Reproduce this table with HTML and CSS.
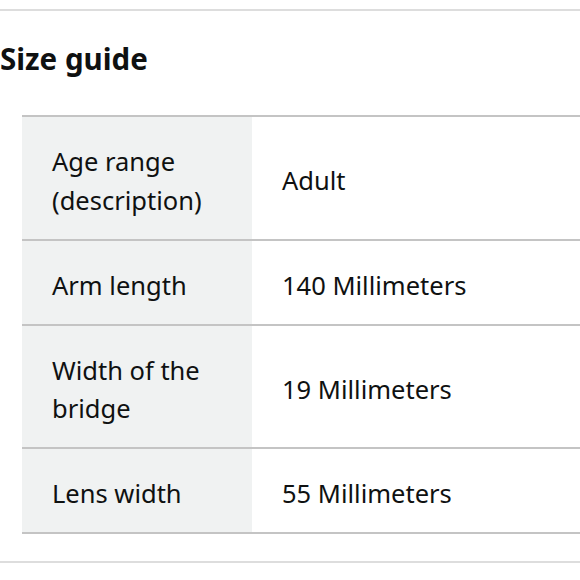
FILE: index.html
```html
<!DOCTYPE html>
<html>
<head>
<meta charset="utf-8">
<link rel="stylesheet" href="styles.css">
</head>
<body>
<div class="rule top"></div>
<h2 class="title">Size guide</h2>
<table class="guide">
  <tr><th>Age range (description)</th><td>Adult</td></tr>
  <tr><th>Arm length</th><td>140 Millimeters</td></tr>
  <tr><th>Width of the bridge</th><td>19 Millimeters</td></tr>
  <tr><th>Lens width</th><td>55 Millimeters</td></tr>
</table>
<div class="rule bottom"></div>
</body>
</html>
```
FILE: styles.css
```css
html, body {
  margin: 0;
  padding: 0;
  background: #fff;
}
body {
  font-family: "Noto Sans", "Open Sans", sans-serif;
  color: #0f1111;
  width: 580px;
  overflow: hidden;
}
.rule {
  height: 0;
  border-top: 2px solid #dddddd;
}
.rule.top {
  margin-top: 9px;
}
.title {
  margin: 28px 0 0 0;
  font-size: 29.5px;
  line-height: 40px;
  font-weight: 700;
}
.guide {
  margin: 36px 0 0 22px;
  width: 580px;
  border-collapse: collapse;
  font-size: 25.5px;
  line-height: 38.5px;
}
.guide tr {
  border-top: 2px solid #c4c4c4;
  border-bottom: 2px solid #c4c4c4;
}
.guide th {
  width: 170px;
  background: #f0f2f2;
  text-align: left;
  font-weight: 400;
  padding: 25px 30px 19.5px;
  vertical-align: middle;
}
.guide td {
  padding: 25px 30px 19.5px;
  vertical-align: middle;
}
.rule.bottom {
  margin-top: 27px;
}
```
